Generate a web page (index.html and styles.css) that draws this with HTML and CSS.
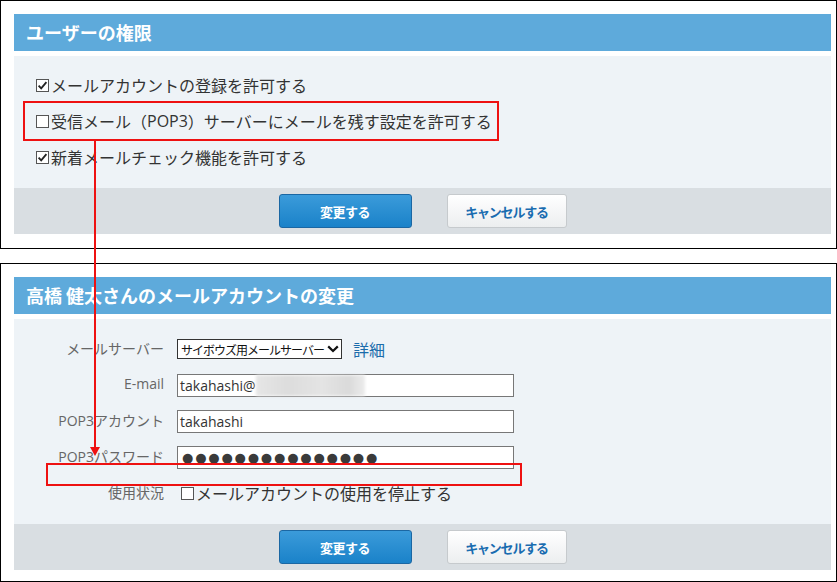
FILE: index.html
```html
<!DOCTYPE html>
<html lang="ja">
<head>
<meta charset="utf-8">
<title>メールアカウント設定</title>
<link rel="stylesheet" href="styles.css">
</head>
<body>
<section class="panel">
  <h2 class="panel-head">ユーザーの権限</h2>
  <div class="panel-body perm-list">
    <label class="perm"><svg class="cb" viewBox="0 0 13 13"><rect x="0.5" y="0.5" width="12" height="12" fill="#fff" stroke="#555"/><path d="M2.6 6.6 L5.2 9.4 L10.4 3.2" fill="none" stroke="#222" stroke-width="1.8"/></svg>メールアカウントの登録を許可する</label>
    <label class="perm"><svg class="cb" viewBox="0 0 13 13"><rect x="0.5" y="0.5" width="12" height="12" fill="#fff" stroke="#555"/></svg>受信メール（<span class="lat">POP3</span>）サーバーにメールを残す設定を許可する</label>
    <label class="perm"><svg class="cb" viewBox="0 0 13 13"><rect x="0.5" y="0.5" width="12" height="12" fill="#fff" stroke="#555"/><path d="M2.6 6.6 L5.2 9.4 L10.4 3.2" fill="none" stroke="#222" stroke-width="1.8"/></svg>新着メールチェック機能を許可する</label>
  </div>
  <div class="actions">
    <button class="btn btn-primary">変更する</button>
    <button class="btn btn-secondary">キャンセルする</button>
  </div>
</section>

<section class="panel panel-second">
  <h2 class="panel-head">高橋 健太さんのメールアカウントの変更</h2>
  <div class="panel-body form">
    <div class="f-label">メールサーバー</div>
    <div class="f-field">
      <div class="select">サイボウズ用メールサーバー<svg class="chev" viewBox="0 0 12 8"><path d="M1.2 1.4 L6 6 L10.8 1.4" fill="none" stroke="#111" stroke-width="2.2"/></svg></div>
      <a class="link">詳細</a>
    </div>
    <div class="f-label lat">E-mail</div>
    <div class="f-field"><div class="input lat">takahashi@<span class="blur"></span></div></div>
    <div class="f-label"><span class="lat">POP3</span>アカウント</div>
    <div class="f-field"><div class="input lat">takahashi</div></div>
    <div class="f-label"><span class="lat">POP3</span>パスワード</div>
    <div class="f-field"><div class="input"><span class="dots">●●●●●●●●●●●●●●●</span></div></div>
    <div class="f-label">使用状況</div>
    <div class="f-field"><label class="perm check-stop"><svg class="cb" viewBox="0 0 13 13"><rect x="0.5" y="0.5" width="12" height="12" fill="#fff" stroke="#555"/></svg>メールアカウントの使用を停止する</label></div>
  </div>
  <div class="actions">
    <button class="btn btn-primary">変更する</button>
    <button class="btn btn-secondary">キャンセルする</button>
  </div>
</section>

<div class="mark mark-top"></div>
<div class="mark mark-bottom"></div>
<div class="arrow-line"></div>
<div class="arrow-head"></div>
</body>
</html>
```

FILE: styles.css
```css
* { box-sizing: border-box; }
html, body { margin: 0; padding: 0; }
body {
  position: relative;
  width: 837px;
  height: 582px;
  background: #fff;
  font-family: "Noto Sans CJK JP", "Open Sans", sans-serif;
  color: #333;
  overflow: hidden;
}
.lat { font-family: "Open Sans", "Noto Sans CJK JP", sans-serif; }

.panel {
  border: 1px solid #000;
  padding: 13px 5px 14px 13px;
  width: 837px;
  background: #fff;
}
.panel-second { margin-top: 14px; padding-bottom: 11px; }

.panel-head {
  margin: 0;
  height: 37px;
  line-height: 37px;
  padding-left: 12px;
  background: #5eaadb;
  color: #fff;
  font-size: 18px;
  font-weight: bold;
}

.panel-body {
  margin-top: 5px;
  background: #eef3f7;
}

.perm-list {
  height: 132px;
  padding: 11px 0 13px 22px;
}
.perm {
  display: flex;
  align-items: center;
  height: 36px;
  font-size: 16px;
  color: #333;
}
.cb {
  width: 13px;
  height: 13px;
  margin-right: 2px;
  flex: none;
}

.actions {
  height: 46px;
  background: #d9dee2;
  display: flex;
  justify-content: center;
  align-items: center;
  gap: 35px;
}
.btn {
  height: 34px;
  border-radius: 3px;
  font-family: "Noto Sans CJK JP", sans-serif;
  font-size: 13px;
  font-weight: bold;
  letter-spacing: -0.5px;
  padding: 0;
}
.btn-primary {
  width: 133px;
  border: 1px solid #1b67a3;
  background: linear-gradient(#3b9bda, #1a82c9);
  color: #fff;
}
.btn-secondary {
  width: 120px;
  border: 1px solid #c6cacd;
  background: linear-gradient(#ffffff, #eceeef);
  color: #1a6cb0;
  letter-spacing: -1.2px;
}

.form {
  height: 205px;
  padding: 12px 0 13px;
  display: grid;
  grid-template-columns: 150px 1fr;
  grid-auto-rows: 36px;
  column-gap: 13px;
  align-items: center;
}
.f-label {
  text-align: right;
  font-size: 14px;
  color: #666;
  line-height: 20px;
  padding-bottom: 2px;
}
.f-field {
  display: flex;
  align-items: center;
}
.select {
  width: 165px;
  height: 20px;
  border: 1px solid #333;
  background: #fff;
  display: flex;
  align-items: center;
  padding-left: 3px;
  font-size: 12px;
  letter-spacing: -1px;
  color: #111;
  white-space: nowrap;
}
.chev {
  width: 12px;
  height: 8px;
  margin-left: 3px;
  flex: none;
}
.link {
  margin-left: 11px;
  font-size: 16px;
  color: #1b6cab;
}
.input {
  width: 337px;
  height: 23px;
  border: 1px solid #777;
  background: #fff;
  display: flex;
  align-items: center;
  padding-left: 2px;
  font-size: 14px;
  color: #333;
  white-space: nowrap;
}
.blur {
  display: inline-block;
  width: 109px;
  height: 21px;
  background: linear-gradient(90deg, #e6e6e6, #dcdcdc 30%, #e4e4e4 60%, #dadada 85%, #ececec);
  filter: blur(1.5px);
}
.dots {
  font-family: "DejaVu Sans", sans-serif;
  font-size: 13px;
  letter-spacing: 1.8px;
  color: #3a3a3a;
  padding-left: 2px;
}
.check-stop { padding-left: 4px; }

.mark {
  position: absolute;
  border: 2px solid #ee1111;
}
.mark-top { left: 23px; top: 101px; width: 476px; height: 40px; }
.mark-bottom { left: 46px; top: 463px; width: 476px; height: 23px; }
.arrow-line {
  position: absolute;
  left: 94px;
  top: 141px;
  width: 2px;
  height: 308px;
  background: #ee1111;
}
.arrow-head {
  position: absolute;
  left: 90px;
  top: 447px;
  width: 0;
  height: 0;
  border-left: 5px solid transparent;
  border-right: 5px solid transparent;
  border-top: 9px solid #ee1111;
}
```
